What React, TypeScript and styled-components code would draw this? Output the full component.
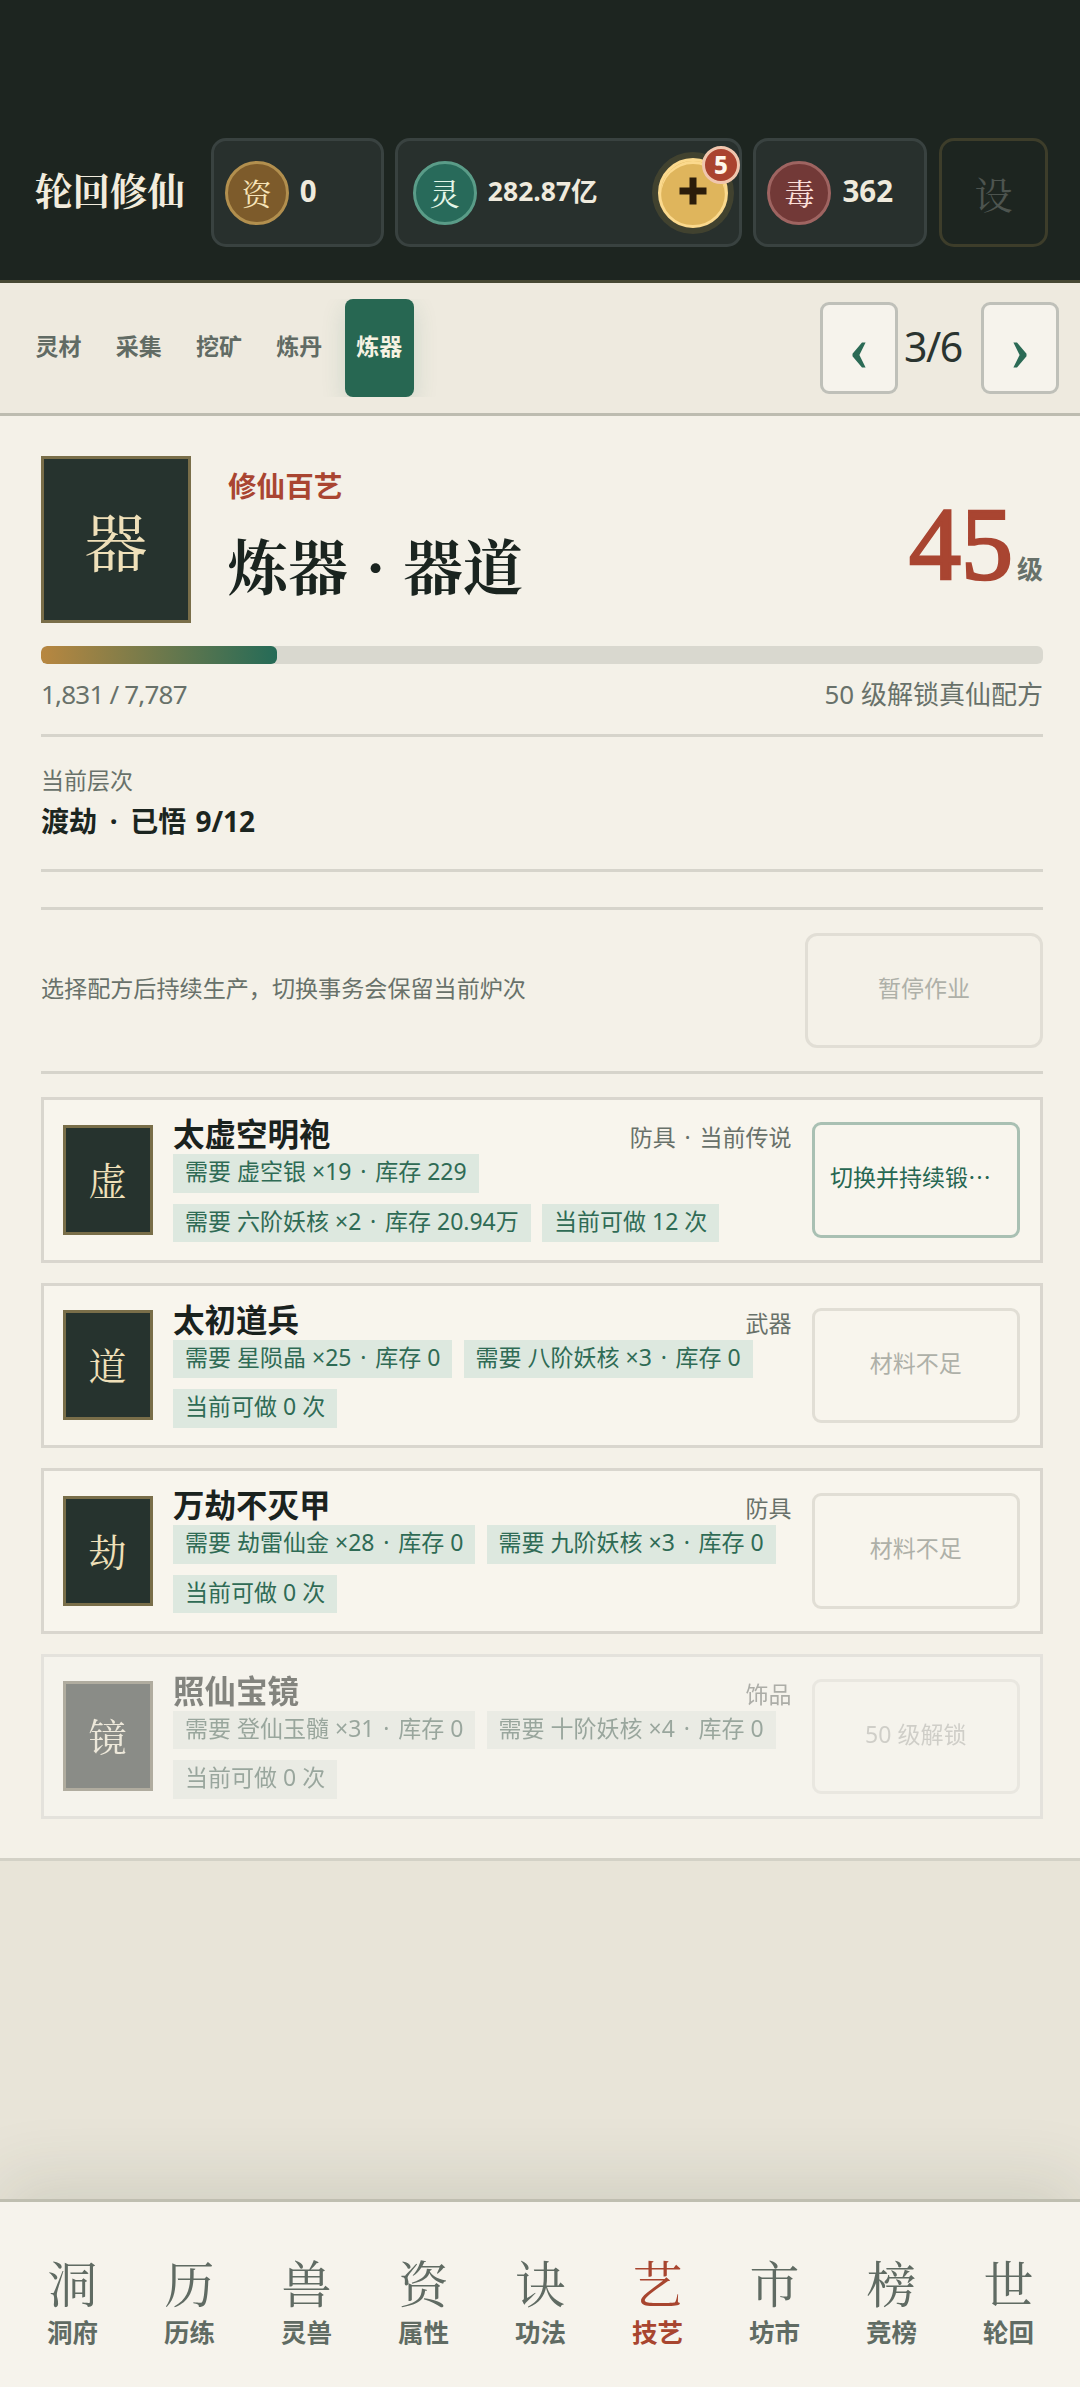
import React from "react";
import styled, { createGlobalStyle, css } from "styled-components";

const sans = `"Noto Sans", "Noto Sans CJK SC", sans-serif`;
const serif = `"Noto Serif CJK SC", "Source Han Serif SC", "Noto Sans CJK SC", serif`;

const color = {
  ink: "#1b2520",
  deep: "#1d2520",
  muted: "#68716a",
  jade: "#276752",
  red: "#a94531",
  line: "#d6d4cb",
};

const GlobalStyle = createGlobalStyle`
  *, *::before, *::after { box-sizing: border-box; }
  html, body { margin: 0; padding: 0; }
  body { font-family: ${sans}; color: ${color.ink}; background: #e8e4d8; }
  button { font: inherit; color: inherit; margin: 0; padding: 0; background: none; border: 0; }
`;

const Screen = styled.div`
  width: 1080px;
  height: 2387px;
  display: flex;
  flex-direction: column;
  overflow: hidden;
  background: #e8e4d8;
`;

/* ---------- header ---------- */
const Header = styled.header`
  flex: none;
  height: 283px;
  display: flex;
  align-items: flex-start;
  gap: 11.6px;
  padding: 138px 32px 0 35px;
  background: ${color.deep};
  border-bottom: 3px solid #474833;
`;

const Brand = styled.h1`
  flex: 1;
  margin: 0;
  height: 108px;
  font: 700 37.5px/103px ${serif};
  color: #f2ecdd;
  white-space: nowrap;
`;

const Pill = styled.div<{ $width: number; $pad: number }>`
  flex: none;
  width: ${(p) => p.$width}px;
  height: 109px;
  display: flex;
  align-items: center;
  gap: 12px;
  padding-left: ${(p) => p.$pad}px;
  padding-right: 11px;
  background: #28302d;
  border: 3px solid #394240;
  border-radius: 15px;
`;

const Seal = styled.span<{ $bg: string; $edge: string; $ink: string }>`
  flex: none;
  width: 64px;
  height: 64px;
  display: grid;
  place-items: center;
  border-radius: 50%;
  border: 3px solid ${(p) => p.$edge};
  background: ${(p) => p.$bg};
  color: ${(p) => p.$ink};
  font: 400 30px/54px ${serif};
  padding-bottom: 2px;
`;

const Amount = styled.strong<{ $size: number }>`
  font-size: ${(p) => p.$size}px;
  font-weight: 700;
  line-height: 40px;
  color: #efeadd;
  white-space: nowrap;
  margin: -3px 0 0 -1px;
`;

const AddButton = styled.button`
  position: relative;
  flex: none;
  width: 70px;
  height: 70px;
  margin-left: auto;
  display: grid;
  place-items: center;
  padding-bottom: 4px;
  border-radius: 50%;
  border: 3px solid #fbd98d;
  background: #dfb55c;
  box-shadow: 0 0 0 6px rgba(200, 160, 60, 0.16), inset 0 3px 0 #fbd98d;
`;

const Badge = styled.span`
  position: absolute;
  top: -15px;
  right: -15px;
  width: 38px;
  height: 38px;
  border-radius: 50%;
  border: 3px solid #f0c6ae;
  background: #aa432f;
  color: #fff6ea;
  font-size: 24px;
  font-weight: 800;
  line-height: 31px;
  text-align: center;
`;

const Settings = styled.button`
  flex: none;
  width: 109px;
  height: 109px;
  border: 3px solid #3d3d2a;
  border-radius: 15px;
  color: #4d544f;
  font: 400 38px/98px ${serif};
`;

/* ---------- tab bar ---------- */
const TabBar = styled.nav`
  flex: none;
  height: 133px;
  display: flex;
  justify-content: space-between;
  align-items: center;
  padding: 0 21px 0 0;
  background: #eeeadf;
  border-bottom: 3px solid #bdbcb0;
`;

const Tabs = styled.div`
  height: 98px;
  display: flex;
  gap: 11px;
  padding: 0 24px;
  overflow: hidden;
`;

const Tab = styled.button<{ $active?: boolean }>`
  width: 69.2px;
  height: 98px;
  padding-bottom: 4px;
  border-radius: 8px;
  font-size: 23px;
  font-weight: 700;
  line-height: 90px;
  white-space: nowrap;
  color: #616b64;
  ${(p) =>
    p.$active &&
    css`
      background: ${color.jade};
      color: #f6f2e2;
      box-shadow: 0 8px 24px rgba(39, 103, 82, 0.16);
    `}
`;

const Pager = styled.div`
  display: flex;
  align-items: center;
`;

const PageButton = styled.button`
  width: 78px;
  height: 92px;
  display: grid;
  place-items: center;
  padding-top: 14px;
  border: 3px solid #bfc0b9;
  border-radius: 9px;
  background: #f6f3ec;
`;

const PageCount = styled.span`
  width: 83px;
  padding: 0 0 5px 6px;
  font-size: 41px;
  line-height: 60px;
  color: #2a3430;
  letter-spacing: -1.5px;
`;

/* ---------- craft panel ---------- */
const Panel = styled.main`
  flex: none;
  height: 1445px;
  padding: 40px 37px 0 41px;
  background: #f4f1e8;
  border-bottom: 3px solid #d3d1c6;
`;

const Hero = styled.section`
  display: flex;
  height: 167px;
`;

const Emblem = styled.div<{ $w: number; $h: number; $size: number }>`
  flex: none;
  width: ${(p) => p.$w}px;
  height: ${(p) => p.$h}px;
  display: grid;
  place-items: center;
  padding-bottom: 2px;
  border: 3px solid #796e49;
  background: #26332e;
  color: #efe0b9;
  font: 400 ${(p) => p.$size}px/1 ${serif};
`;

const HeroText = styled.div`
  flex: 1;
  padding: 11px 0 0 37px;
`;

const Kicker = styled.div`
  font-size: 28.6px;
  font-weight: 700;
  line-height: 38px;
  color: ${color.red};
`;

const HeroTitle = styled.h2`
  margin: 21px 0 0;
  font: 700 60px/76px ${serif};
  word-spacing: 2.5px;
  color: #1a241f;
  white-space: pre;
`;

const Level = styled.div`
  display: flex;
  align-items: baseline;
  gap: 4px;
  height: 130px;
  padding-top: 28px;
`;

const LevelNumber = styled.span`
  font: 400 104px/120px "Liberation Serif", serif;
  -webkit-text-stroke: 2.6px ${color.red};
  color: ${color.red};
`;

const LevelUnit = styled.span`
  font-size: 26px;
  font-weight: 700;
  line-height: 30px;
  color: ${color.muted};
`;

const Track = styled.div`
  height: 18px;
  margin-top: 23px;
  border-radius: 6px;
  background: #d9d8cf;
  overflow: hidden;
`;

const Fill = styled.div`
  height: 100%;
  border-radius: 6px;
  background: linear-gradient(90deg, #b88740, #256b57);
`;

const TrackNotes = styled.div`
  height: 70px;
  display: flex;
  justify-content: space-between;
  font-size: 26px;
  line-height: 60px;
  color: ${color.muted};
`;

const Progress = styled.span`
  letter-spacing: -0.8px;
`;

const Stage = styled.section`
  height: 138px;
  padding-top: 27px;
  border-top: 3px solid ${color.line};
  border-bottom: 3px solid ${color.line};
`;

const StageLabel = styled.div`
  font-size: 23px;
  line-height: 33px;
  color: ${color.muted};
`;

const StageValue = styled.div`
  margin-top: 5px;
  font-size: 28px;
  font-weight: 700;
  line-height: 38px;
  word-spacing: 2px;
  color: ${color.ink};
`;

const JobBar = styled.section`
  height: 167px;
  margin: 35px 0 23px;
  display: flex;
  align-items: center;
  justify-content: space-between;
  border-top: 3px solid ${color.line};
  border-bottom: 3px solid ${color.line};
  font-size: 23.1px;
  color: ${color.muted};
`;

const JobNote = styled.span`
  padding-bottom: 7px;
`;

const ActionButton = styled.button<{ $w: number; $r: number; $on?: boolean }>`
  flex: none;
  width: ${(p) => p.$w}px;
  height: 115.5px;
  padding: 0 15px 7px;
  border: 3px solid ${(p) => (p.$on ? "#a9c0b3" : "#e1ded5")};
  border-radius: ${(p) => p.$r}px;
  font-size: 23px;
  text-align: ${(p) => (p.$on ? "left" : "center")};
  color: ${(p) => (p.$on ? color.jade : "#aeb0a8")};
  white-space: nowrap;
`;

const Ellipsis = styled.span`
  font-family: "Noto Sans CJK SC", sans-serif;
`;

const Recipes = styled.section`
  display: flex;
  flex-direction: column;
  gap: 20px;
`;

const Card = styled.article<{ $locked?: boolean }>`
  height: 165.5px;
  display: flex;
  align-items: center;
  gap: 20.5px;
  padding: 0 20.5px 0 18.6px;
  border: 3px solid #d9d6ce;
  background: #f8f5ed;
  ${(p) =>
    p.$locked &&
    css`
      opacity: 0.52;
      filter: grayscale(0.55);
    `}
`;

const CardBody = styled.div`
  flex: 1;
  min-width: 0;
`;

const CardHead = styled.div`
  height: 37px;
  display: flex;
  justify-content: space-between;
`;

const CardName = styled.strong`
  font-size: 31.5px;
  font-weight: 700;
  line-height: 34px;
  color: #1a221e;
`;

const CardKind = styled.span`
  font-size: 23px;
  line-height: 41px;
  color: ${color.muted};
`;

const Tags = styled.div`
  display: flex;
  flex-wrap: wrap;
  gap: 11.3px;
`;

const Tag = styled.span`
  height: 38.5px;
  padding: 0 12px;
  background: #dde8df;
  color: #2f6b55;
  font-size: 23px;
  line-height: 34.5px;
  white-space: nowrap;
`;

const Dot = styled.span`
  margin: 0 0.12em;
`;

/* ---------- bottom navigation ---------- */
const Spacer = styled.div`
  flex: 1;
`;

const BottomNav = styled.nav`
  flex: none;
  height: 188px;
  display: grid;
  grid-template-columns: repeat(9, 1fr);
  padding: 52px 13px 0 14px;
  background: #f6f3ec;
  border-top: 3px solid #bfbeb0;
  box-shadow: 0 -20px 68px rgba(50, 66, 40, 0.12);
`;

const NavItem = styled.button<{ $active?: boolean }>`
  display: flex;
  flex-direction: column;
  align-items: center;
  color: ${(p) => (p.$active ? "#a8452f" : "#606b63")};
`;

const NavGlyph = styled.span`
  font: 400 50px/54px ${serif};
`;

const NavLabel = styled.span`
  margin-top: 7px;
  font-size: 25.5px;
  font-weight: 700;
  line-height: 34px;
`;

type Recipe = {
  glyph: string;
  name: string;
  kind: string;
  tags: string[];
  action: string;
  clipped?: boolean;
  ready?: boolean;
  locked?: boolean;
};

const recipes: Recipe[] = [
  {
    glyph: "虚",
    name: "太虚空明袍",
    kind: "防具 · 当前传说",
    tags: ["需要 虚空银 ×19 · 库存 229", "需要 六阶妖核 ×2 · 库存 20.94万", "当前可做 12 次"],
    action: "切换并持续锻",
    clipped: true,
    ready: true,
  },
  {
    glyph: "道",
    name: "太初道兵",
    kind: "武器",
    tags: ["需要 星陨晶 ×25 · 库存 0", "需要 八阶妖核 ×3 · 库存 0", "当前可做 0 次"],
    action: "材料不足",
  },
  {
    glyph: "劫",
    name: "万劫不灭甲",
    kind: "防具",
    tags: ["需要 劫雷仙金 ×28 · 库存 0", "需要 九阶妖核 ×3 · 库存 0", "当前可做 0 次"],
    action: "材料不足",
  },
  {
    glyph: "镜",
    name: "照仙宝镜",
    kind: "饰品",
    tags: ["需要 登仙玉髓 ×31 · 库存 0", "需要 十阶妖核 ×4 · 库存 0", "当前可做 0 次"],
    action: "50 级解锁",
    locked: true,
  },
];

const tabs = ["灵材", "采集", "挖矿", "炼丹", "炼器"];

const navItems = [
  ["洞", "洞府"],
  ["历", "历练"],
  ["兽", "灵兽"],
  ["资", "属性"],
  ["诀", "功法"],
  ["艺", "技艺"],
  ["市", "坊市"],
  ["榜", "竞榜"],
  ["世", "轮回"],
];

const Chevron = ({ flip }: { flip?: boolean }) => (
  <svg width="14" height="26" viewBox="0 0 14 26" transform={flip ? "scale(-1 1)" : undefined}>
    <path d="M10 0.5H13.6L7.4 13L13.6 25.5H10L0.5 14.2V11.8Z" fill="#2b6a55" />
  </svg>
);

/* Sets a little extra air on both sides of each middle dot. */
const Dotted = ({ text }: { text: string }) => (
  <>
    {text.split("·").map((part, i) => (
      <React.Fragment key={i}>
        {i > 0 && <Dot>·</Dot>}
        {part}
      </React.Fragment>
    ))}
  </>
);

const progress = (1831 / 7787) * 100;

export default function App() {
  return (
    <Screen lang="zh-CN">
      <GlobalStyle />
      <Header>
        <Brand>轮回修仙</Brand>
        <Pill $width={173} $pad={11}>
          <Seal $bg="#7d5b2b" $edge="#b28f4e" $ink="#f7e4b8">资</Seal>
          <Amount $size={29.5}>0</Amount>
        </Pill>
        <Pill $width={346.5} $pad={14.5}>
          <Seal $bg="#286a5a" $edge="#5a9c88" $ink="#e4f6e8">灵</Seal>
          <Amount $size={26.5}>282.87亿</Amount>
          <AddButton>
            <svg width="28" height="28" viewBox="0 0 28 28">
              <path d="M10.5 0.5h7v10h10v7h-10v10h-7v-10h-10v-7h10z" fill="#2b1c0a" />
            </svg>
            <Badge>5</Badge>
          </AddButton>
        </Pill>
        <Pill $width={174} $pad={11}>
          <Seal $bg="#723937" $edge="#9f6461" $ink="#fbdfd8">毒</Seal>
          <Amount $size={29.5}>362</Amount>
        </Pill>
        <Settings>设</Settings>
      </Header>

      <TabBar>
        <Tabs>
          {tabs.map((t) => (
            <Tab key={t} $active={t === "炼器"}>{t}</Tab>
          ))}
        </Tabs>
        <Pager>
          <PageButton><Chevron /></PageButton>
          <PageCount>3/6</PageCount>
          <PageButton><Chevron flip /></PageButton>
        </Pager>
      </TabBar>

      <Panel>
        <Hero>
          <Emblem $w={150} $h={167} $size={63}>器</Emblem>
          <HeroText>
            <Kicker>修仙百艺</Kicker>
            <HeroTitle>炼器 · 器道</HeroTitle>
          </HeroText>
          <Level>
            <LevelNumber>45</LevelNumber>
            <LevelUnit>级</LevelUnit>
          </Level>
        </Hero>
        <Track>
          <Fill style={{ width: `${progress}%` }} />
        </Track>
        <TrackNotes>
          <Progress>1,831 / 7,787</Progress>
          <span>50 级解锁真仙配方</span>
        </TrackNotes>
        <Stage>
          <StageLabel>当前层次</StageLabel>
          <StageValue><Dotted text="渡劫 · 已悟 9/12" /></StageValue>
        </Stage>
        <JobBar>
          <JobNote>选择配方后持续生产，切换事务会保留当前炉次</JobNote>
          <ActionButton $w={238} $r={12}>暂停作业</ActionButton>
        </JobBar>
        <Recipes>
          {recipes.map((r) => (
            <Card key={r.name} $locked={r.locked}>
              <Emblem $w={90} $h={110} $size={38}>{r.glyph}</Emblem>
              <CardBody>
                <CardHead>
                  <CardName>{r.name}</CardName>
                  <CardKind><Dotted text={r.kind} /></CardKind>
                </CardHead>
                <Tags>
                  {r.tags.map((t) => (
                    <Tag key={t}><Dotted text={t} /></Tag>
                  ))}
                </Tags>
              </CardBody>
              <ActionButton $w={207.5} $r={9} $on={r.ready}>
                {r.action}
                {r.clipped && <Ellipsis>…</Ellipsis>}
              </ActionButton>
            </Card>
          ))}
        </Recipes>
      </Panel>

      <Spacer />

      <BottomNav>
        {navItems.map(([g, label]) => (
          <NavItem key={label} $active={g === "艺"}>
            <NavGlyph>{g}</NavGlyph>
            <NavLabel>{label}</NavLabel>
          </NavItem>
        ))}
      </BottomNav>
    </Screen>
  );
}
